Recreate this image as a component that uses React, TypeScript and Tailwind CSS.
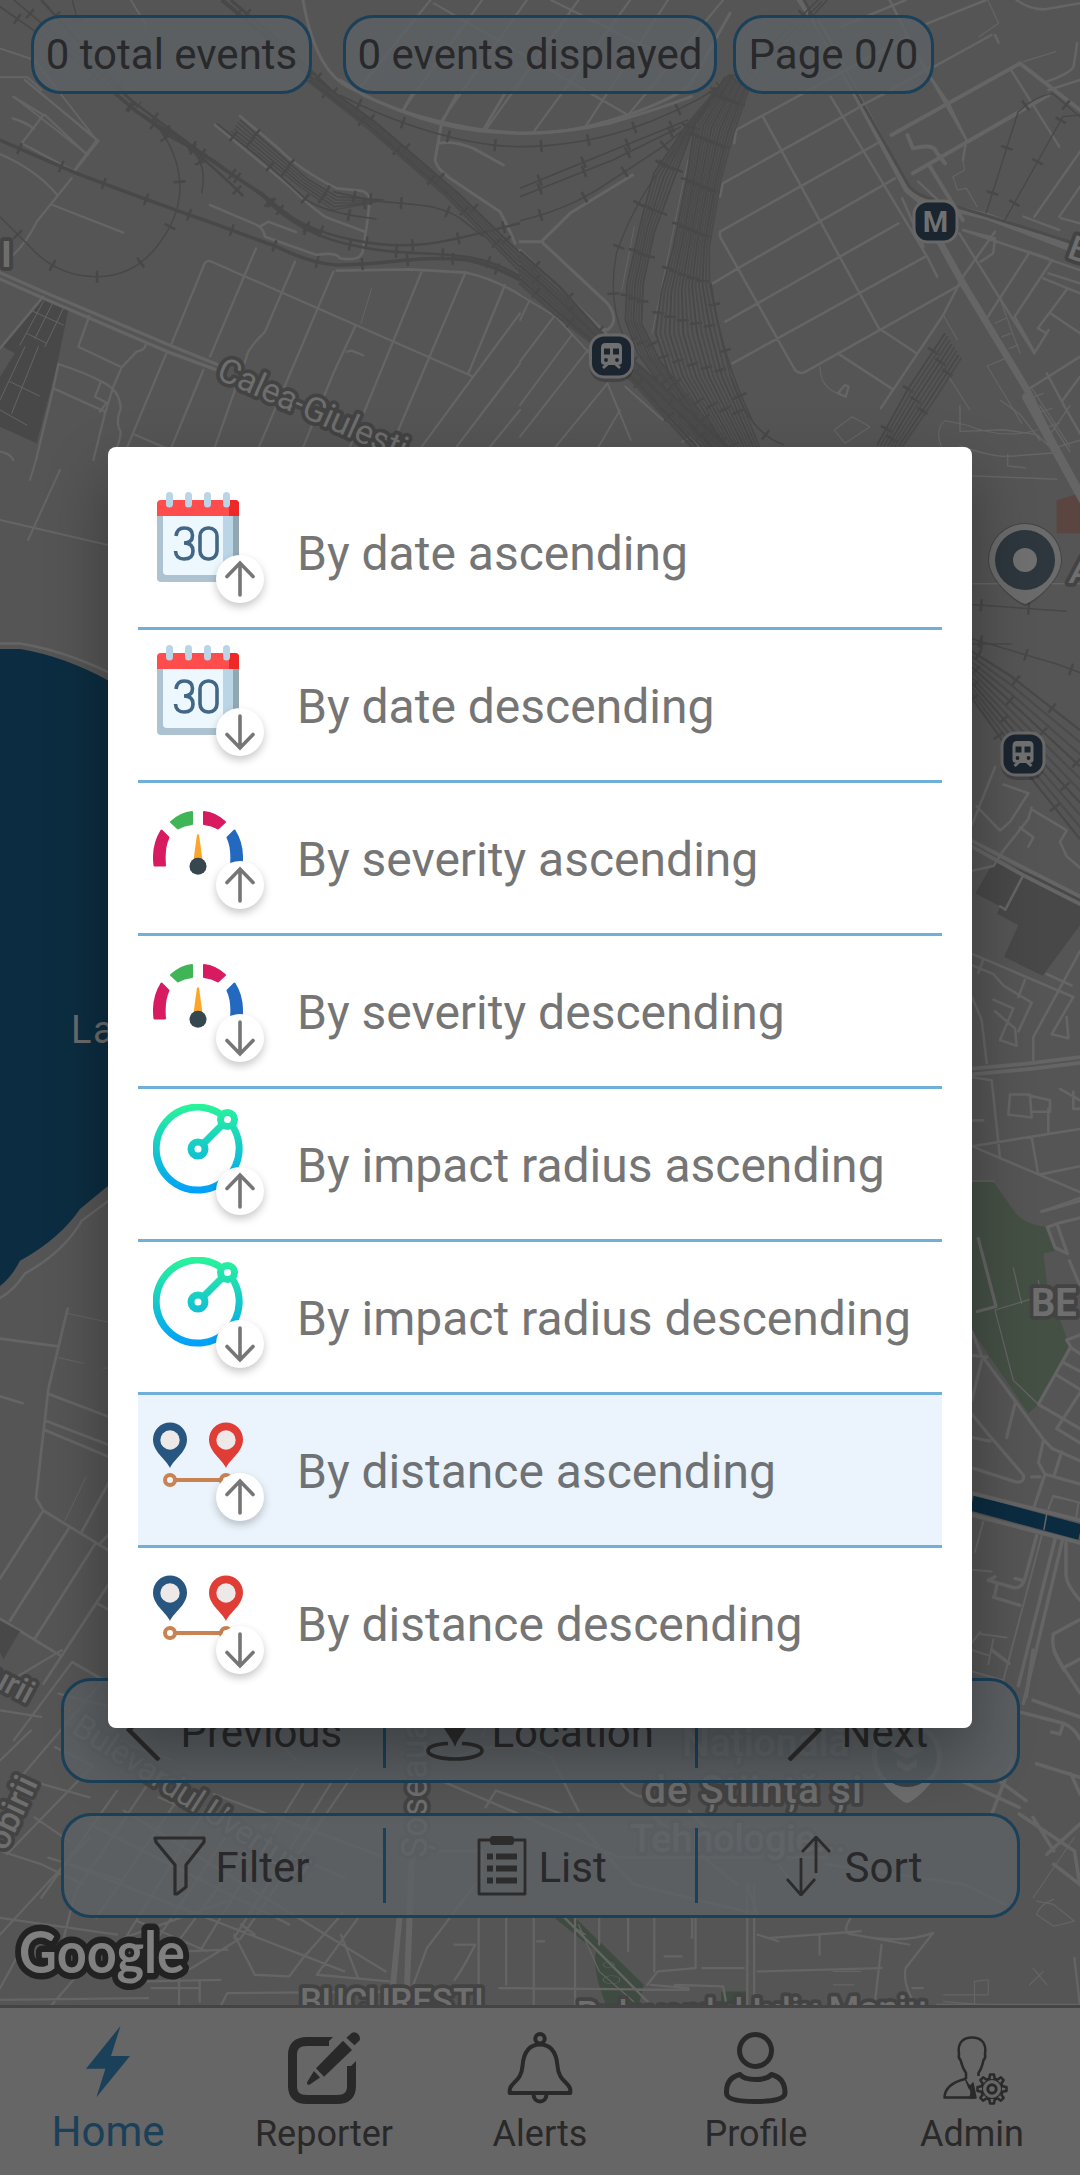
import type { ReactNode } from "react";

type Pt = [number, number];

const ROAD = "#656565";
const RAIL = "#484848";

/* ---------- map primitives ---------- */

function Roads({ d, w = 2.5, c = ROAD }: { d: string; w?: number; c?: string }) {
  return (
    <path
      d={d}
      fill="none"
      stroke={c}
      strokeWidth={w}
      strokeLinejoin="round"
      strokeLinecap="round"
      vectorEffect="non-scaling-stroke"
    />
  );
}

function Rail({ d, w = 1.6, tick = 12, gap = 45 }: { d: string; w?: number; tick?: number; gap?: number }) {
  return (
    <g fill="none" stroke={RAIL}>
      <path d={d} strokeWidth={w} vectorEffect="non-scaling-stroke" />
      <path d={d} strokeWidth={tick} strokeDasharray={`2.5 ${gap}`} strokeDashoffset={-20} vectorEffect="non-scaling-stroke" />
    </g>
  );
}

/* Tracks spread evenly between two edge polylines. */
function Yard({ a, b, n, w = 1.5 }: { a: Pt[]; b: Pt[]; n: number; w?: number }) {
  const lines = Array.from({ length: n }, (_, i) => {
    const t = i / (n - 1);
    return "M" + a.map((p, k) => `${p[0] + (b[k][0] - p[0]) * t} ${p[1] + (b[k][1] - p[1]) * t}`).join("L");
  });
  return (
    <g>
      {lines.map((d, i) =>
        i % 3 === 0 ? <Rail key={i} d={d} w={w} tick={12} gap={43} /> : <Roads key={i} d={d} w={w} c="#4b4b4b" />,
      )}
    </g>
  );
}

function Label({
  x,
  y,
  size,
  rotate = 0,
  weight = 500,
  length,
  italic,
  children,
}: {
  x: number;
  y: number;
  size: number;
  rotate?: number;
  weight?: number;
  length?: number;
  italic?: boolean;
  children: string;
}) {
  return (
    <text
      transform={`translate(${x} ${y}) rotate(${rotate})`}
      fontSize={size}
      fontWeight={weight}
      fontStyle={italic ? "italic" : undefined}
      textLength={length}
      fill="#6e6e6e"
      stroke="#434343"
      strokeWidth={7.5}
      strokeLinejoin="round"
      paintOrder="stroke"
    >
      {children}
    </text>
  );
}

function TrainMarker({ x, y }: { x: number; y: number }) {
  return (
    <g transform={`translate(${x} ${y})`}>
      <rect x={-22} y={-20} width={44} height={46} rx={15} fill="#000" opacity={0.2} />
      <rect x={-21} y={-21} width={42} height={42} rx={13.5} fill="#1b252f" stroke="#686868" strokeWidth={3} />
      <path d="M-6 -13H6Q10.500 -13 10.500 -8V6Q10.500 9 6 9H-6Q-10.500 9 -10.500 6V-8Q-10.500 -13 -6 -13Z" fill="#707070" />
      <path d="M-4 8L-8.500 12M4 8L8.500 12" stroke="#707070" strokeWidth={3} />
      <path d="M-7.500 -7.500H-1.500V-1.500H-7.500ZM1.500 -7.500H7.500V-1.500H1.500Z" fill="#1b252f" />
      <circle cx={-5.5} cy={4} r={1.9} fill="#1b252f" />
      <circle cx={5.5} cy={4} r={1.9} fill="#1b252f" />
    </g>
  );
}

function MapCanvas() {
  return (
    <svg className="absolute inset-0 h-full w-full" viewBox="0 0 1080 2175" fontFamily="Roboto, sans-serif">
      <rect width={1080} height={2175} fill="#555555" />

      {/* top edge */}
      <g transform="scale(.6887 .33333)">
        <Roads w={3} d="M440 0C450 120 470 230 510 265C560 320 600 350 640 372C680 392 720 400 765 400C830 400 870 370 912 345C960 310 1000 270 1006 240L1060 40" />
        <Roads w={2.2} d="M625 0L520 270M700 0L585 330M765 0L640 365M840 0L705 390M915 0L775 395M970 0L850 380M1050 0L912 345M630 10L912 345M800 0L1006 210" />
        <Roads w={2} d="M0 145L50 180L140 420L108 510M20 290L128 465M20 355L50 385M0 232H40L60 270M190 0L212 75" />
        <Rail d="M0 20L110 180L195 330L255 420M20 0L130 190L200 320" />
        <Rail w={2.5} d="M60 0L190 300L300 470" />
        <Rail w={4} d="M322 0L410 150L480 290" />
        <Rail w={3} d="M335 0L420 150L490 290" />
        <Rail w={1.5} d="M105 0L115 80" />
      </g>

      {/* north-west quarter */}
      <g transform="translate(0 80) scale(.33333)">
        <path d="M130 650L205 690L170 860L110 1090L0 1040V890L45 820L10 800Z" fill={RAIL} />
        <Roads w={1} d="M130 665L60 795M160 665L105 775M190 685L135 800M90 690L190 735M80 760L140 790M115 800L35 1000M75 800L0 960M30 905L118 948M0 990L80 1035" />
        <Roads w={2.3} d="M75 0L295 183L222 275M135 105L262 225M40 50L130 105L65 190L225 275M38 115Q90 130 100 148M0 222Q110 270 172 345M215 295L110 425Q85 480 35 530M158 375L370 458" />
        <Roads w={2.5} d="M0 805L130 650" />
        <Roads w={3.3} d="M0 578L130 635L515 798L650 853M0 597L130 655L510 818L645 868" />
        <Roads w={2.3} d="M268 708L235 800L365 862L410 815Q435 810 437 795M365 862L340 920L315 1000L280 1140M175 852L160 925L108 1140M175 852Q260 880 305 905Q360 930 362 985Q345 1030 362 1055Q360 1090 345 1110M160 925L315 995M303 905L285 950L320 968L300 995M0 1115Q30 1120 40 1140" />
        <Roads w={2.3} d="M515 790L610 560Q615 540 630 543L1415 888M500 818L380 1105M768 505L630 830M610 870L515 1100M885 545L795 755Q740 810 740 830L645 1100M1000 575L860 905L775 1105M1065 740L1000 880L910 1100M1265 575L1050 1100M1395 580L1195 1050M1515 615L1405 880M400 1062L500 1105M1560 700L1265 1100M1560 850L1370 1100M1560 990L1470 1100M1040 815L1055 812L1090 826" />
        <Roads w={1} d="M1115 625L1083 730" />
        <Roads w={2.6} d="M1010 572L1230 568L1400 578Q1480 595 1560 645M630 375L760 430Q790 440 795 470L950 525Q1010 515 1020 535Q1080 545 1088 515L1100 440L1110 360Q1105 335 1080 332L1010 325Q900 270 835 205L720 108M645 135L870 320Q930 380 975 410L1095 455M780 440L805 425L888 456" />
        <Roads w={3} d="M1020 0L1100 50Q1250 120 1450 150L1560 160M1325 128L1305 240Q1310 265 1350 295L1500 395Q1530 450 1545 490M1315 190Q1360 180 1420 205L1510 255M1235 45L1210 90M1370 45L1325 128M1515 40L1450 150" />
        <Rail w={3.5} gap={43} d="M0 180L230 280Q440 360 640 430L830 500Q930 550 1010 555C1150 555 1260 525 1400 540Q1480 555 1560 600" />
        <Rail w={1.5} gap={44} d="M345 40L480 150Q540 230 540 330Q535 420 470 500Q400 590 290 590Q170 590 90 500L0 410" />
        <Rail w={3.5} gap={40} d="M345 40L410 95L560 190L690 280L790 345Q870 420 960 460" />
        <Rail w={2.5} gap={44} d="M410 95L520 175L640 240L790 350Q900 470 1080 500C1250 540 1400 490 1560 590M560 195Q640 260 730 348M790 350Q900 450 1060 480C1250 520 1350 480 1560 430" />
        <Rail w={1.5} d="M560 200Q625 240 605 340" />
        <Yard n={5} a={[[720, 120], [920, 295], [1010, 350], [1150, 360]]} b={[[695, 155], [900, 320], [1000, 390], [1110, 370]]} />
        <Rail w={1.7} d="M650 130L800 250L920 360Q980 400 1130 417M1000 335Q1100 360 1150 365C1250 375 1330 370 1400 430L1450 470" />
        <Yard n={5} w={2.2} a={[[950, 0], [1130, 130], [1380, 345], [1560, 520]]} b={[[920, 0], [1110, 150], [1340, 350], [1560, 575]]} />
        <Rail w={1.5} d="M1020 45C1180 130 1400 200 1560 200" />
      </g>

      {/* north-east quarter */}
      <g transform="translate(520 0) scale(.35714 .33333)">
        <Roads w={7} d="M785 0L850 100L1085 570L1120 600L1310 650L1568 755" />
        <Roads w={7} d="M1175 725L1240 850L1420 1170L1500 1350" />
        <Roads w={3} c="#4c4c4c" d="M795 0L945 285L1090 560Q1110 585 1160 600L1300 645L1568 735" />
        <Roads w={4} d="M1040 405L1400 190L1568 330M1100 520L1480 285M1085 405L1100 445Q1160 430 1165 455L1190 490M1145 495L1240 660" />
        <Roads w={2.5} d="M600 430L605 390L870 235M870 235L1085 110M560 590L568 550L945 325M1000 430L560 695V710L770 1110Q785 1125 800 1115L1240 850M680 350L1005 985L1110 1060M870 290L1140 770L1168 830M1050 535L610 805L540 850M1060 670L575 965M1135 770L595 1090M1130 75L1305 0M900 80L1080 0M950 320L1040 270L1150 200M1035 0L1110 160L1250 420M1145 225L1200 310L1250 420L1240 480M1375 210L1510 440M1320 105L1160 200M1330 105L1340 128M1568 455L1440 650M1568 240L1480 270M1560 130L1550 200Q1540 220 1475 245M1390 0Q1430 30 1470 28L1568 10" />
        <Roads w={2.5} d="M1070 595L1130 740M1115 545L1180 610M1240 690L1568 810M1230 700L1440 1060L1480 990M1240 690L1330 715L1325 760L1290 785M1330 695L1240 830L1185 945L1010 1225M1425 760L1310 950M1350 730L1480 775M1490 780L1385 950L1440 1055M1480 820L1568 850M1465 835L1568 880M1530 870L1450 985L1475 1000M1485 940L1568 1000M1568 1070L1420 1170L1500 1350M1475 1120L1530 1230L1568 1300M1568 1130L1520 1200M1568 560L1510 650M1515 655L1568 670M1410 650L1510 690M890 1060L1040 1165M910 1155L890 1180L912 1190L920 1160Z" />
        <Roads w={1.2} d="M1310 0L1340 70L1285 110M1500 155L1410 185M1240 480L1245 510L1212 530L1225 570L1250 565L1280 620M1225 1020L1185 945M840 1100Q840 1160 890 1180M880 1290L930 1250L980 1280L910 1330L880 1290M1180 1340Q1160 1290 1190 1262L1250 1275Q1350 1320 1450 1290M1308 1098L1360 1075M1308 1098L1405 1270M1345 900L1400 1060M1430 1160L1540 1340M1200 1130L1260 1230M1330 970L1360 955M1350 1010L1375 1000M1370 1045L1395 1035M1440 1190L1465 1180M1460 1235L1490 1225M1480 1280L1510 1270" />
        <Roads w={3} d="M0 400Q130 400 250 370Q380 330 480 290M0 725H60L245 910Q280 960 245 990L225 985M60 725L140 640L315 525M0 750L240 1000" />
        <Roads w={2} d="M0 885L100 950M100 950L195 1060M25 905L0 960M95 950L0 1085M145 1005L0 1215M190 1050L0 1310M245 1150L100 1340M245 1150L310 1320M280 1230L220 1340M295 1160L400 1260M455 1325L480 1310L500 1340" />
        <Roads w={1} d="M320 680L285 870M470 480L420 740L370 1000" />
        <Rail d="M0 440Q150 440 300 390Q440 340 560 260M0 565L250 455L470 360M0 590L260 480L450 380M0 662Q130 630 230 560L400 440L480 370" />
        <Rail w={1.4} d="M440 440Q320 600 270 760Q245 900 290 1010" />
        <Rail w={1.4} d="M1305 640L1395 335Q1440 290 1490 280L1568 350M1355 665L1520 350L1568 345" />
        <Yard
          n={7}
          w={1.8}
          a={[[585, 225], [470, 370], [375, 520], [340, 660], [300, 850], [295, 960], [330, 1060], [520, 1340]]}
          b={[[600, 225], [490, 370], [430, 540], [375, 700], [345, 850], [340, 970], [390, 1080], [580, 1340]]}
        />
        <Yard
          n={15}
          w={1.9}
          a={[[575, 230], [490, 370], [470, 520], [430, 740], [395, 880], [380, 1000], [420, 1130], [550, 1340]]}
          b={[[645, 255], [598, 400], [562, 540], [530, 740], [530, 850], [560, 1000], [590, 1130], [670, 1340]]}
        />
        <Yard n={8} w={2.8} a={[[0, 755], [110, 860], [220, 990], [400, 1160], [580, 1340]]} b={[[0, 850], [95, 940], [190, 1020], [320, 1150], [480, 1340]]} />
        <Rail w={1.5} d="M590 1130Q640 1300 740 1335M535 850Q560 1060 650 1260" />
        <Yard n={8} w={1.9} a={[[1190, 1000], [1085, 1170], [1000, 1335]]} b={[[1235, 1075], [1160, 1200], [1070, 1340]]} />
        <Rail w={1.5} d="M860 0L640 260M835 0L600 240M845 5L620 250" />
      </g>

      {/* western lake */}
      <g transform="translate(0 600) scale(.33333 .70151)">
        <path d="M0 70H60Q190 80 330 116V833L240 868Q180 910 60 942Q35 965 0 978Z" fill="#0c2d41" />
        <Roads w={2.5} d="M0 62H60Q190 72 330 104M0 995Q40 985 75 960Q190 930 245 885L330 855" />
        <Roads w={2.8} d="M203 1010L145 1125L108 1280L130 1298L330 1356M0 1053L175 1064M0 1135L68 1145M147 1132L330 1165M137 1170L330 1205M133 1183L330 1222M130 1298L0 1395M208 1322L30 1455M286 1345L105 1480M330 1255L243 1330M330 1400L130 1545M0 1452L182 1505M290 1430L330 1440M330 1330L300 1345M220 1515L330 1545" />
        <Roads w={1} d="M203 1017L330 1030M175 1080L250 1088M310 1095H330M258 1250L195 1312" />
        <path d="M0 1455L60 1470L10 1510L0 1500Z" fill={RAIL} />
      </g>
      <Roads w={2} d="M36 460L30 480M60 470L28 540M0 520L108 545" />
      <text x={71} y={1043} fontSize={38} fill="#6c6c6c" letterSpacing={1.5}>
        La
      </text>

      {/* eastern side */}
      <g transform="translate(960 400) scale(.33333 .57398)">
        <path d="M290 175L360 162V232H290Z" fill="#5b4541" />
        <path d="M105 800L46 860L120 882L112 895L175 915L132 970L248 1003L360 915V862L250 835Z" fill={RAIL} />
        <Roads w={9} d="M200 -5L370 175" />
        <Roads w={1.5} d="M0 10L0 55L130 52L230 60L275 85L360 70M0 80Q100 100 150 98L290 92M120 0L180 25L240 70M240 10L330 90M270 60L330 10M143 95V115L196 118M36 132L290 138M0 320H360" />
        <Rail w={1.5} d="M0 355L320 368M0 425L155 425M0 410L290 460L360 475" />
        <Yard n={10} w={2.2} a={[[0, 425], [150, 480], [360, 575]]} b={[[0, 490], [160, 620], [360, 765]]} />
        <Roads w={3.8} d="M36 768L190 815L360 865M36 778L190 828L360 878M36 1165L220 1155L360 1145M36 1175L220 1165L360 1155" />
        <Roads w={2.6} d="M36 740L105 640M50 708L120 750L150 735L205 685L130 670M215 710L205 730L130 785L100 812L36 820M220 715L320 750L300 770L320 795L360 815M180 745L220 762L205 778M120 882L136 888L190 828M36 965L340 1040M70 975L55 998M36 985L100 1000L130 1020L215 1050L175 1100M36 1040L65 1080L80 1155M100 1045L160 1060L120 1115L170 1125L165 1095L105 1065M195 1010L175 1040M360 960L220 1110V1150M340 1040L275 1105L325 1112L320 1075M260 1000L335 1020M36 1180L95 1185L120 1320M36 1300L360 1380M36 1300L360 1270M150 1210L145 1245L215 1250L210 1210ZM195 1210L270 1220V1240H215M265 1235V1275M215 1285L235 1350L360 1335M36 1255L70 1255M300 1200L360 1220M340 1205V1235H360M36 1362H100M245 1414L370 1388" />
        <path d="M36 1362H100L165 1415Q190 1435 250 1440L265 1445L283 1480L250 1485L262 1568H36Z" fill="#455045" />
      </g>
      <g transform="translate(960 1200) scale(.33333 .35714)">
        <path d="M36 0H138Q160 60 190 68L265 76L283 143L250 150L262 240L328 405L235 572L205 598L36 365Z" fill="#455045" />
        <Roads w={3.2} d="M55 108L108 298L52 312M262 76L295 65L360 50M262 76L285 133L322 150L292 70M245 32L360 2M328 170L360 240M36 370L65 435L250 670L275 695L360 730M36 435L80 440M65 450L36 560M330 415L235 572L360 640M320 392L360 378M320 392L335 415L360 430M290 490L360 530M310 455L360 480M360 540L290 640L360 680M36 600L80 650L190 770Q195 790 170 790L36 750M165 570L140 665M250 675L235 735L255 768L222 860M255 768L360 795M305 705L283 770M215 775L240 775M36 665L90 675" />
        <Roads w={1.2} d="M105 308L240 270M160 190L185 290M105 308L160 505L235 572M235 225L255 330" />
        <path d="M36 848L360 930" stroke="#0b2c40" strokeWidth={44} />
        <Roads w={4} d="M36 821L360 897M36 882L360 960" />
        <Roads w={1.5} d="M260 880L252 922" />
        <Roads w={2} d="M265 865L280 828L360 848M355 850L348 890M280 830L330 840M70 900L45 985M36 1320L130 1345L245 940M36 1035L95 1040M60 1210L36 1240M60 1215L140 1225M100 1230L85 1300M36 1260L85 1275" />
        <Roads w={3.5} d="M230 940L195 1060Q185 1090 160 1085L85 1065L105 1055M105 1105L110 1080M100 1112L180 1135M165 1060L190 1065M285 950L175 1360M308 950L190 1410M318 960V1050Q320 1080 360 1120M360 1175L280 1215Q270 1260 310 1310L360 1380M310 1310L360 1285M185 1435L310 1465L300 1495L275 1490M310 1465Q345 1480 360 1510" />
      </g>

      {/* south */}
      <g transform="translate(0 1650) scale(.6887 .3348)">
        <path d="M805 800H835L935 1000L925 1080L880 1060Q860 960 865 900ZM1047 1020H1085V1070H1047Z" fill="#3f4b40" />
        <Roads w={2.3} d="M0 110L90 0M105 35L20 270M150 90L30 380M0 180L60 200M45 240L0 330M85 130L160 170M95 215L250 330M80 290L135 345L10 610M60 400L130 440M50 500L100 570M0 600L60 640L120 700M130 560L0 850M70 620L180 690M170 420L60 740M0 800L170 850M215 400L110 720L90 880M260 440L140 800M300 470L170 900M340 520L200 950M385 520L230 950M440 400L290 900M480 400L340 860M520 350L350 860L270 960M100 640L500 960M130 520L420 820M180 480L560 960M230 440L500 680M310 430L560 620M180 860L330 750M200 810L300 900M340 850L370 970L420 975L440 920L500 780M370 850L350 820M520 800L460 970L565 990M0 1045L215 1040M0 1010L40 860M270 900L330 895M215 990L320 985M260 960V1070M290 990V1050M220 1010H290M75 1060L130 930M320 1065L330 1025L600 1020M620 890L600 1000M620 890L690 700M495 850L520 980" />
        <Roads w={6} d="M580 800L568 1060M620 180L600 500L590 1060" />
        <Roads w={2.3} d="M695 800V1010M735 800V1000M775 800L775 1060M725 1010L1000 1015M660 880L690 880M780 870H790M690 880Q670 960 660 985M835 800V1060M820 800L945 1060M870 800V880M912 800V900M950 800V960M1010 800V950L955 960L940 1000M965 915H990M1005 800V860M1020 950H1080M980 1000L1050 1005L1055 1060M1085 700V1060M1095 700V1060M1100 850L1130 870M1120 860L1250 840M1100 960L1280 950M1190 850V910M1280 880L1270 1060M1235 800Q1220 850 1240 850Q1310 880 1355 845M1355 845L1315 950Q1310 1000 1330 1060M1240 850L1320 880M1360 1060H1568L1560 920M1325 1010H1340M945 1000L1000 1010" />
        <Roads w={1.2} d="M840 820L870 960L920 1050M850 850L835 830M1210 960H1250M1210 1000H1240M1370 1030H1435V985L1415 990V1060M1370 1050L1430 1060M1500 950L1520 1000M1495 1000L1515 960M1505 750L1530 760L1560 810L1530 825L1505 790Q1510 760 1530 745M1500 740L1560 560" />
        <Roads w={3.6} d="M1480 490L1560 600L1568 700M1500 500L1530 600M1395 390L1480 470M1568 520L1520 610M1470 330L1440 490M1500 150L1568 200M1505 340L1568 380M1555 370L1568 430M1450 390L1490 450M1440 0L1465 40M1500 0L1490 140M1545 60L1530 0M1530 640L1568 700" />
        <Roads w={2.5} d="M640 390L900 620L1200 620M720 420L705 470M720 420L830 500M650 330Q730 250 800 320L840 480M900 390Q910 430 935 440M730 120L700 260M640 600H700V680M840 520L920 700L1100 790L1085 700M1100 560L1160 720M1200 640L1400 700L1460 760M950 500L1070 700M1000 480L1060 600M500 120L640 300M350 160L430 330" />
        <circle cx={884} cy={940} r={8} fill="none" stroke="#5a635a" strokeWidth={1.5} />
        <circle cx={888} cy={985} r={12} fill="none" stroke="#5a635a" strokeWidth={1.5} />
      </g>

      {/* place names */}
      <Label x={215} y={378} size={34} rotate={24} weight={400} length={204}>
        Calea-Giulesti
      </Label>
      <Label x={1} y={267} size={37} weight={700}>
        I
      </Label>
      <Label x={1066} y={257} size={34} rotate={20}>
        B
      </Label>
      <Label x={1070} y={583} size={36} italic>
        A
      </Label>
      <Label x={1031} y={1316} size={38} weight={700}>
        BE
      </Label>
      <Label x={-13} y={1683} size={32} rotate={28}>
        urii
      </Label>
      <Label x={6} y={1852} size={34} rotate={-65}>
        obirii
      </Label>
      <Label x={70} y={1732} size={33} rotate={33} weight={400} length={276}>
        Bulevardul Uverturii
      </Label>
      <Label x={427} y={1858} size={36} rotate={-90} length={138} weight={400}>
        Șoseaua
      </Label>
      <Label x={682} y={1756} size={39}>
        Națională
      </Label>
      <Label x={644} y={1803} size={39} length={218}>
        de Știință și
      </Label>
      <Label x={630} y={1852} size={39} length={216}>
        Tehnologie...
      </Label>
      <Label x={300} y={2013} size={35} length={184}>
        BUCUREȘTI
      </Label>
      <Label x={577} y={2026} size={35} rotate={-1} length={350}>
        Bulevardul Iuliu Maniu
      </Label>

      {/* markers */}
      <TrainMarker x={611.5} y={356} />
      <TrainMarker x={1023} y={754} />
      <rect x={914} y={201} width={43} height={41} rx={13.5} fill="#1b252f" stroke="#686868" strokeWidth={3} />
      <text x={935.5} y={231.5} fontSize={29} fontWeight={700} textAnchor="middle" fill="#707070">
        M
      </text>
      <g transform="translate(1025 560)">
        <path d="M0 46C-5 46 -37 22 -37 0A37 37 0 0 1 37 0C37 22 5 46 0 46Z" fill="#000" opacity={0.2} />
        <path d="M0 44C-5 44 -36 22 -36 0A36 36 0 0 1 36 0C36 22 5 44 0 44Z" fill="#6b6b6b" />
        <circle r={30} fill="#2d373d" />
        <circle r={12} fill="#707070" />
      </g>
      <g transform="translate(907 1757)">
        <path d="M0 46C-5 46 -35 22 -35 0A35 35 0 0 1 35 0C35 22 5 46 0 46Z" fill="#6e6e6e" />
        <circle r={30} fill="#3a4247" />
        <path d="M-16 -7L0 -16L16 -7L0 2ZM-10 2L0 8L10 2V9L0 15L-10 9Z" fill="#6c6c6c" />
      </g>

      <text
        x={19}
        y={1973}
        fontSize={58}
        fontWeight={700}
        fontFamily="Lato, sans-serif"
        textLength={166}
        lengthAdjust="spacingAndGlyphs"
        fill="#808080"
        stroke="#222222"
        strokeWidth={13}
        strokeLinejoin="round"
        paintOrder="stroke"
      >
        Google
      </text>
    </svg>
  );
}

/* ---------- controls over the map ---------- */

function Pill({ className, children }: { className: string; children: ReactNode }) {
  return (
    <div
      className={`flex h-[79px] items-center justify-center rounded-[30px] border-[3px] border-[#1b4059] bg-[#5d6265]/85 text-[42px] leading-none text-[#29292b] ${className}`}
    >
      {children}
    </div>
  );
}

function Bar({ children }: { children: ReactNode }) {
  return (
    <div className="flex h-[105px] w-[959px] items-center rounded-[30px] border-[3px] border-[#1b4059] bg-[#5d6265]/85 text-[42px] leading-none text-[#29292b]">
      {children}
    </div>
  );
}

function Cell({ className, icon, label, last }: { className: string; icon: ReactNode; label: string; last?: boolean }) {
  return (
    <div className={`flex h-[75px] items-center ${last ? "" : "border-r-[3px] border-[#1b4059]"} ${className}`}>
      <svg width="60" height="60" viewBox="0 0 60 60" fill="none" stroke="#2d2c2c" className="shrink-0">
        {icon}
      </svg>
      <span className="pt-1">{label}</span>
    </div>
  );
}

const prevIcon = <path d="M41 2L13 29L43 59" strokeWidth={4.5} />;
const nextIcon = <path d="M17 2L45 29L15 59" strokeWidth={4.5} />;
const locationIcon = (
  <>
    <path d="M30 46C27 36 16 28 16 16A14 14 0 0 1 44 16C44 28 33 36 30 46Z" fill="#2d2c2c" stroke="none" />
    <path d="M23 42.500C10 43 3 46 3 50C3 54 14 58 30 58S57 54 57 50C57 46 50 43 37 42.500" strokeWidth={3.6} />
  </>
);
const filterIcon = <path d="M5 2H54V6L36 29V51L27 58H25V29L6 6Z" strokeWidth={3.2} strokeLinejoin="round" />;
const listIcon = (
  <>
    <path d="M19 4H7V58H53V4H41" strokeWidth={2.8} strokeLinejoin="round" />
    <rect x={18} y={0} width={24} height={9} rx={3} fill="#2d2c2c" stroke="none" />
    <path d="M15 20.500H21M15 32.500H21M15 44.500H21M24 20.500H45M24 32.500H45M24 44.500H45" strokeWidth={6} />
  </>
);
const sortIcon = (
  <path d="M37 37V1M23 16L37 1L51 16M22 22V59M8 43L22 59L36 43" strokeWidth={2.8} strokeLinejoin="round" />
);

/* ---------- sort menu ---------- */

function CalendarIcon() {
  return (
    <>
      <path d="M4 20H86V86Q86 90 82 90H8Q4 90 4 86Z" fill="#adc3d1" />
      <path d="M80 24H86V86Q86 90 82 90H76Z" fill="#91a8b3" />
      <path d="M10 24H80V79Q80 83 76 83H14Q10 83 10 79Z" fill="#bad5e6" />
      <path d="M10 24H70V83H14Q10 83 10 79Z" fill="#edf7fe" />
      <path d="M8 8H82Q86 8 86 12V24H4V12Q4 8 8 8Z" fill="#fe4d4c" />
      <path d="M76 8H82Q86 8 86 12V24H76Z" fill="#f02727" />
      <path d="M16.500 3.500V12M35.500 3.500V12M54.500 3.500V12M73.500 3.500V12" stroke="#b9d5e6" strokeWidth={7} strokeLinecap="round" />
      <path
        d="M23 44Q24 36 31 36Q39.500 36 39.500 43.500Q39.500 51 31 51Q40 51 40 59Q40 67 31 67Q23 67 22.500 59"
        fill="none"
        stroke="#426686"
        strokeWidth={3.6}
      />
      <rect x={47} y={36} width={17} height={31} rx={8} fill="none" stroke="#426686" strokeWidth={3.6} />
    </>
  );
}

function GaugeIcon() {
  return (
    <>
      <g strokeLinejoin="round" strokeWidth={2}>
        <path d="M1.500 68Q-1 48 8.500 33L15.500 40Q10.500 50 12 68Z" fill="#d81b60" stroke="#d81b60" transform="translate(0 -.5)" />
        <path d="M18 24Q28 15 39 14V26Q31 27 25 30.500Z" fill="#3fb557" stroke="#3fb557" />
        <path d="M51 14Q62 15 72 24L65 30.500Q59 27 51 26Z" fill="#d81b60" stroke="#d81b60" />
        <path d="M88.500 68Q91 48 81.500 33L74.500 40Q79.500 50 78 68Z" fill="#2469c0" stroke="#2469c0" transform="translate(0 -.5)" />
      </g>
      <path d="M44 36.500H46L50 66H40Z" fill="#fba629" />
      <circle cx={45} cy={68.3} r={8.5} fill="#37474f" />
    </>
  );
}

function RadiusIcon({ id }: { id: string }) {
  return (
    <>
      <defs>
        <linearGradient id={id} gradientUnits="userSpaceOnUse" x1="0" y1="0" x2="0" y2="90">
          <stop offset="0" stopColor="#2af598" />
          <stop offset="1" stopColor="#009efd" />
        </linearGradient>
      </defs>
      <g fill="none" stroke={`url(#${id})`} strokeWidth={7}>
        <path d="M69.300 11.200A41.500 41.500 0 1 0 79.800 22.500" />
        <circle cx={74.5} cy={15.5} r={7} />
        <circle cx={45} cy={45} r={7} />
        <path d="M50 40L69.500 20.500" />
      </g>
    </>
  );
}

function DistanceIcon() {
  const pin = "M17 58C13 49 0 42 0 29.500A17 17 0 0 1 34 29.500C34 42 21 49 17 58Z";
  return (
    <>
      <path d={pin} fill="#275680" />
      <path d={pin} transform="translate(56 0)" fill="#e13d37" />
      <circle cx={17} cy={30} r={9.7} fill="#ece9e8" />
      <circle cx={73} cy={30} r={9.7} fill="#ece9e8" />
      <g fill="none" stroke="#c98252" strokeWidth={4}>
        <path d="M22 70H68" />
        <circle cx={17} cy={70} r={5} />
        <circle cx={73} cy={70} r={5} />
      </g>
    </>
  );
}

function ArrowBadge({ down }: { down?: boolean }) {
  return (
    <span className="absolute top-[63px] left-[63px] flex size-12 items-center justify-center rounded-full bg-white shadow-[0_4px_8px_rgba(0,0,0,0.22)]">
      <svg width="30" height="38" viewBox="0 0 30 38" className={down ? "rotate-180" : ""}>
        <path d="M15 35V3M2 16.500L15 3L28 16.500" fill="none" stroke="#767676" strokeWidth="3.600" strokeLinecap="round" />
      </svg>
    </span>
  );
}

type Item = { label: string; icon: ReactNode; down?: boolean; active?: boolean };

const items: Item[] = [
  { label: "By date ascending", icon: <CalendarIcon /> },
  { label: "By date descending", icon: <CalendarIcon />, down: true },
  { label: "By severity ascending", icon: <GaugeIcon /> },
  { label: "By severity descending", icon: <GaugeIcon />, down: true },
  { label: "By impact radius ascending", icon: <RadiusIcon id="radius-up" /> },
  { label: "By impact radius descending", icon: <RadiusIcon id="radius-down" />, down: true },
  { label: "By distance ascending", icon: <DistanceIcon />, active: true },
  { label: "By distance descending", icon: <DistanceIcon />, down: true },
];

function SortMenu() {
  return (
    <ul className="absolute top-[447px] left-[108px] h-[1281px] w-[864px] rounded-lg bg-white px-[30px] py-[30px] shadow-[0_28px_64px_rgba(0,0,0,0.32)]">
      {items.map((item, i) => (
        <li
          key={item.label}
          className={`flex items-start px-[15px] pt-[15px] ${
            i < items.length - 1 ? "h-[153px] border-b-[3px] border-[#6fafda]" : "h-[150px]"
          } ${item.active ? "bg-[#ebf4fc]" : ""}`}
        >
          <span className="relative size-[90px] shrink-0">
            <svg width="90" height="90" viewBox="0 0 90 90">
              {item.icon}
            </svg>
            <ArrowBadge down={item.down} />
          </span>
          <span className={`pt-[32px] pl-[54px] text-[48px] leading-[60px] whitespace-nowrap ${item.active ? "text-[#6e7275]" : "text-[#757575]"}`}>
            {item.label}
          </span>
        </li>
      ))}
    </ul>
  );
}

/* ---------- bottom navigation ---------- */

const gearTeeth = Array.from({ length: 8 }, (_, i) => i * 45);

const tabs = [
  {
    label: "Home",
    icon: <path d="M48.500 0L14 42.700H33.400L24.400 71.300L58 30H39Z" fill="#1b4059" />,
  },
  {
    label: "Reporter",
    icon: (
      <>
        <path d="M41 9.500H19Q4.500 9.500 4.500 23V54Q4.500 67.500 19 67.500H49Q63.500 67.500 63.500 54V34" fill="none" stroke="#292929" strokeWidth={9} />
        <path d="M40 5H45L36 14H40ZM68 29V38H59Z" fill="#292929" />
        <path d="M55 8.700L64 18L36 44.700L28 36.300ZM26 39L32 45.500L21.500 52.700Q18.500 53.500 19.200 50ZM58.400 5.700L64 .8Q67 -1 70 2T71.500 8.500L66.500 13.300Z" fill="#292929" />
      </>
    ),
  },
  {
    label: "Alerts",
    icon: (
      <g fill="none" stroke="#292929" strokeWidth={4} strokeLinejoin="round">
        <circle cx={36} cy={6.7} r={4.7} />
        <path d="M36 12.500C24 12.500 19.500 22 18.500 34C17.500 50 6 50 5.700 58V61H66.300V58C66 50 54.500 50 53.500 34C52.500 22 48 12.500 36 12.500ZM29.500 62C29.500 72 42.500 72 42.500 62" />
      </g>
    ),
  },
  {
    label: "Profile",
    icon: (
      <g fill="none" stroke="#292929" strokeWidth={5} strokeLinejoin="round">
        <circle cx={35.5} cy={18.5} r={16} />
        <path d="M20 42.500Q6 46 6.500 61Q6.500 69.500 35.500 69.500T65 61Q65 46 51.500 42.500Q47 47.500 35.500 47.500T20 42.500Z" />
      </g>
    ),
  },
  {
    label: "Admin",
    icon: (
      <g fill="none" stroke="#2a2a2a" strokeWidth={2.5} strokeLinejoin="round">
        <path d="M30 47V41Q26.500 36 24.500 28Q22 26 23 22C21 10 28 5.500 36 5.500S51 10 49 22Q50 26 47.500 28Q46 36 42.500 41V44" />
        <path d="M29 47Q9 52 8.500 65.500H38L33 53" />
        <path d="M29 46L33 56L37 51L40 66H34L36 57" fill="#2a2a2a" strokeWidth={1.5} />
        <circle cx={56} cy={57} r={4.2} strokeWidth={3} />
        <circle cx={56} cy={57} r={10.5} strokeWidth={3} />
        {gearTeeth.map((a) => (
          <path key={a} d="M53.300 47L54 42.500H58L58.700 47" fill="#666666" transform={`rotate(${a} 56 57)`} />
        ))}
      </g>
    ),
  },
];

function BottomNav() {
  return (
    <nav className="relative flex h-[170px] shrink-0 border-t-[3px] border-[#444444] bg-[#666666]">
      {tabs.map((tab, i) => (
        <div key={tab.label} className={`flex flex-1 flex-col items-center ${i === 0 ? "pt-[18px] text-[#1b4059]" : "pt-6 text-[#292929]"}`}>
          <svg width="72" height="72" viewBox="0 0 72 72" className="overflow-visible">
            {tab.icon}
          </svg>
          <span className={i === 0 ? "mt-[10px] text-[42px] leading-[48px]" : "mt-[9px] text-[36px] leading-[42px]"}>{tab.label}</span>
        </div>
      ))}
    </nav>
  );
}

export default function App() {
  return (
    <div className="relative flex h-[2175px] w-[1080px] flex-col overflow-hidden bg-[#555555] font-[Roboto,sans-serif]">
      <MapCanvas />
      <div className="relative flex flex-1 flex-col justify-between">
        <div className="flex pt-[15px] pl-[31px]">
          <Pill className="w-[281px]">0 total events</Pill>
          <Pill className="ml-[31px] w-[374px]">0 events displayed</Pill>
          <Pill className="ml-4 w-[201px]">Page 0/0</Pill>
        </div>
        <div className="flex flex-col items-center gap-[30px] pb-[87px]">
          <Bar>
            <Cell className="w-[322px] gap-[5px] pl-[52px]" icon={prevIcon} label="Previous" />
            <Cell className="w-[312px] gap-[7px] pl-[39px]" icon={locationIcon} label="Location" />
            <Cell className="gap-2 pl-[76px]" icon={nextIcon} label="Next" last />
          </Bar>
          <Bar>
            <Cell className="w-[322px] gap-[6px] pl-[86px]" icon={filterIcon} label="Filter" />
            <Cell className="w-[312px] gap-[7px] pl-[86px]" icon={listIcon} label="List" />
            <Cell className="gap-[6px] pl-[81px]" icon={sortIcon} label="Sort" last />
          </Bar>
        </div>
      </div>
      <BottomNav />
      <SortMenu />
    </div>
  );
}
